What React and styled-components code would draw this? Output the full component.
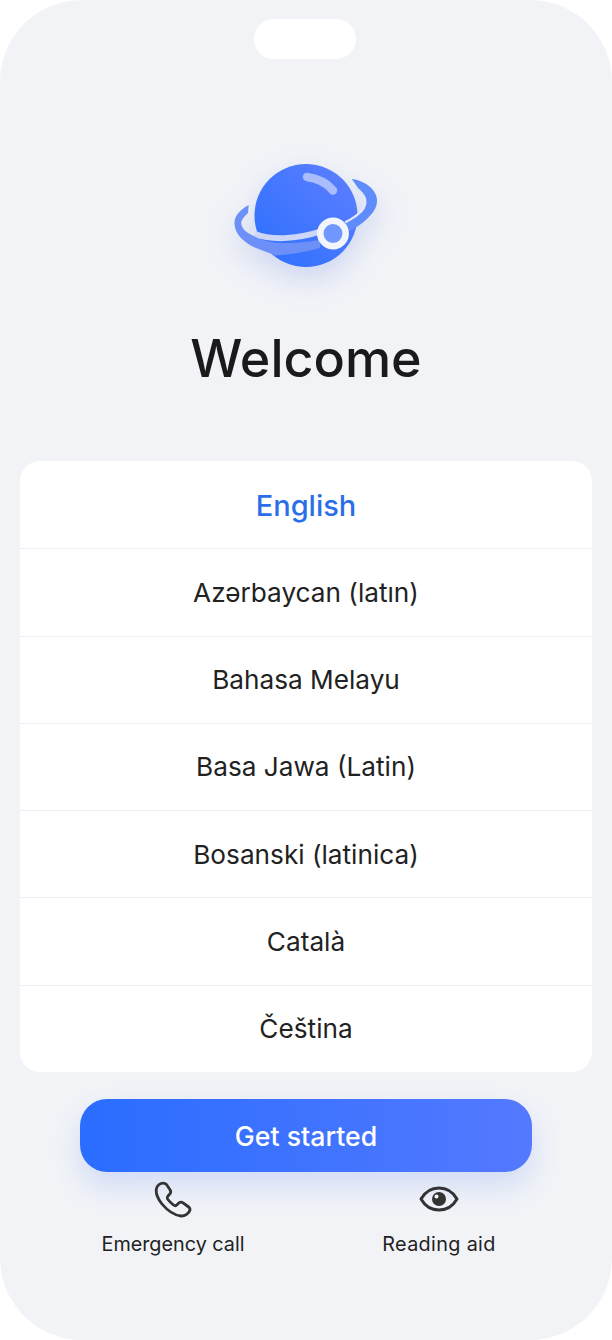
import React from 'react';
import styled, { createGlobalStyle } from 'styled-components';

const languages = [
  'English',
  'Azərbaycan (latın)',
  'Bahasa Melayu',
  'Basa Jawa (Latin)',
  'Bosanski (latinica)',
  'Català',
  'Čeština',
];

const App = () => {
  return (
    <Phone>
      <GlobalStyle />
      <Notch />
      <Logo viewBox="225 150 165 130">
        <defs>
          <linearGradient id="planet" x1="0" y1="1" x2="1" y2="0">
            <stop offset="0" stopColor="#2a6fff" />
            <stop offset="1" stopColor="#5f7fff" />
          </linearGradient>
        </defs>
        <circle cx="306" cy="215.500" r="51.500" fill="url(#planet)" />
        <path d="M307 177C318 178.500 327 183 333 190.500" fill="none" stroke="#a9bcfb" strokeWidth="8.500" strokeLinecap="round" />
        {/* pale band between the planet and the ring */}
        <path d="M255 234C270 240 295 240 322 231" fill="none" stroke="#cdd6f7" strokeWidth="6" />
        <path d="M346 224C358 218 367 210 366.500 201C366 196 363 191 357 187" fill="none" stroke="#e2e6f8" strokeWidth="6" />
        <path
          d="M248.700 205C240 210 234 216 234.500 224C235 234 244 243 256 248C262 250.500 268 252 275 255.500C290 254.500 305 252 320 248L320 240C305 242.500 290 243.500 278 242.700C268 242.500 256 238 248 233C242 229 240 224 242 220C243.500 217 246 215 248 213Z"
          fill="#6c90f8"
        />
        <path
          d="M351.700 179C362 180 372 186 376 195C379 204 375 211 368 218C362 224 355 228 346 233L345 224C355 218 362 214 365 208C369 200 365 194 358 188C356 185 354 182 351.700 179Z"
          fill="#5f8cfb"
        />
        <circle cx="333" cy="233.500" r="12.700" fill="#6f97ff" stroke="#f3f5fc" strokeWidth="6.500" />
      </Logo>
      <Title>Welcome</Title>
      <LanguageList>
        {languages.map((name, i) => (
          <LanguageRow key={name} $active={i === 0}>{name}</LanguageRow>
        ))}
      </LanguageList>
      <StartButton>Get started</StartButton>
      <Actions>
        <Action>
          <ActionIcon viewBox="0 0 40 38" width="40" height="38">
            <path
              d="M8 3.500C5.500 4.500 3.500 7 3.200 10C3 14 5 19 9 24C14 30 20 35 28 36C32 36.200 36 33.500 37 30C37.200 28.500 36.500 27.500 35 26.500L30 22.800C28.500 21.800 27 22 25.800 23L23.500 25.200C22.500 26 21.500 25.800 20.500 25C18 23 16 21 14.500 19C14 18 14 17 15 16L16.800 14C17.800 13 18 11.500 17.200 10L13.500 4.500C12 3 10 2.800 8 3.500Z"
              fill="none"
              stroke="#333"
              strokeWidth="2.800"
              strokeLinejoin="round"
            />
          </ActionIcon>
          <ActionLabel>Emergency call</ActionLabel>
        </Action>
        <Action>
          <ActionIcon viewBox="0 0 40 38" width="40" height="38">
            <path d="M2 19C6 12 13 8 20 8C27 8 34 12 38 19C34 26 27 30 20 30C13 30 6 26 2 19Z" fill="none" stroke="#333" strokeWidth="3" strokeLinejoin="round" />
            <circle cx="20" cy="19" r="7" fill="#333" />
            <circle cx="17.500" cy="16.500" r="2" fill="#f1f3f7" />
          </ActionIcon>
          <ReadingLabel>Reading aid</ReadingLabel>
        </Action>
      </Actions>
    </Phone>
  );
};

const GlobalStyle = createGlobalStyle`
  html, body {
    margin: 0;
    background: #fff;
  }
`;

const Phone = styled.main`
  box-sizing: border-box;
  width: 612px;
  height: 1340px;
  padding-top: 19px;
  display: flex;
  flex-direction: column;
  align-items: center;
  background: #f1f3f7;
  border-radius: 82px;
  font-family: Inter, "Noto Sans", sans-serif;
  overflow: hidden;
`;

const Notch = styled.div`
  width: 102px;
  height: 40px;
  margin-right: 2px;
  border-radius: 20px;
  background: #fff;
`;

const Logo = styled.svg`
  width: 165px;
  height: 130px;
  margin: 91px 0 0 3px;
  flex: none;
  overflow: visible;
  filter: drop-shadow(0 12px 14px rgba(70, 100, 220, 0.2));
`;

const Title = styled.h1`
  margin: 44px 0 0;
  height: 70px;
  line-height: 70px;
  font-size: 52px;
  font-weight: 500;
  color: #1a1a1a;
`;

const LanguageList = styled.ul`
  box-sizing: border-box;
  width: 572px;
  height: 611px;
  margin: 67px 0 0;
  padding: 1px 0 0;
  list-style: none;
  display: flex;
  flex-direction: column;
  background: #fff;
  border-radius: 20px;
`;

const LanguageRow = styled.li`
  flex: 1;
  display: flex;
  align-items: center;
  justify-content: center;
  font-size: ${p => (p.$active ? '29px' : '26.2px')};
  font-weight: ${p => (p.$active ? 500 : 400)};
  color: ${p => (p.$active ? '#2b6fe8' : '#222')};
  border-bottom: 1px solid #eceef2;

  &:last-child {
    border-bottom: none;
  }
`;

const StartButton = styled.button`
  width: 452px;
  height: 73px;
  margin-top: 27px;
  flex: none;
  border: none;
  border-radius: 27px;
  font-family: inherit;
  font-size: 26.7px;
  font-weight: 500;
  color: #fff;
  background: linear-gradient(90deg, #2a6dff, #5479ff);
  box-shadow: 0 14px 28px rgba(50, 100, 240, 0.16);
`;

const Actions = styled.div`
  width: 532px;
  margin-top: 8px;
  display: flex;
  justify-content: space-between;
`;

const Action = styled.div`
  width: 266px;
  display: flex;
  flex-direction: column;
  align-items: center;
  gap: 12px;
`;

const ActionIcon = styled.svg`
  display: block;
`;

const ActionLabel = styled.span`
  font-size: 19.8px;
  line-height: 28px;
  color: #222;
`;

const ReadingLabel = styled(ActionLabel)`
  letter-spacing: 0.35px;
`;

export default App;
